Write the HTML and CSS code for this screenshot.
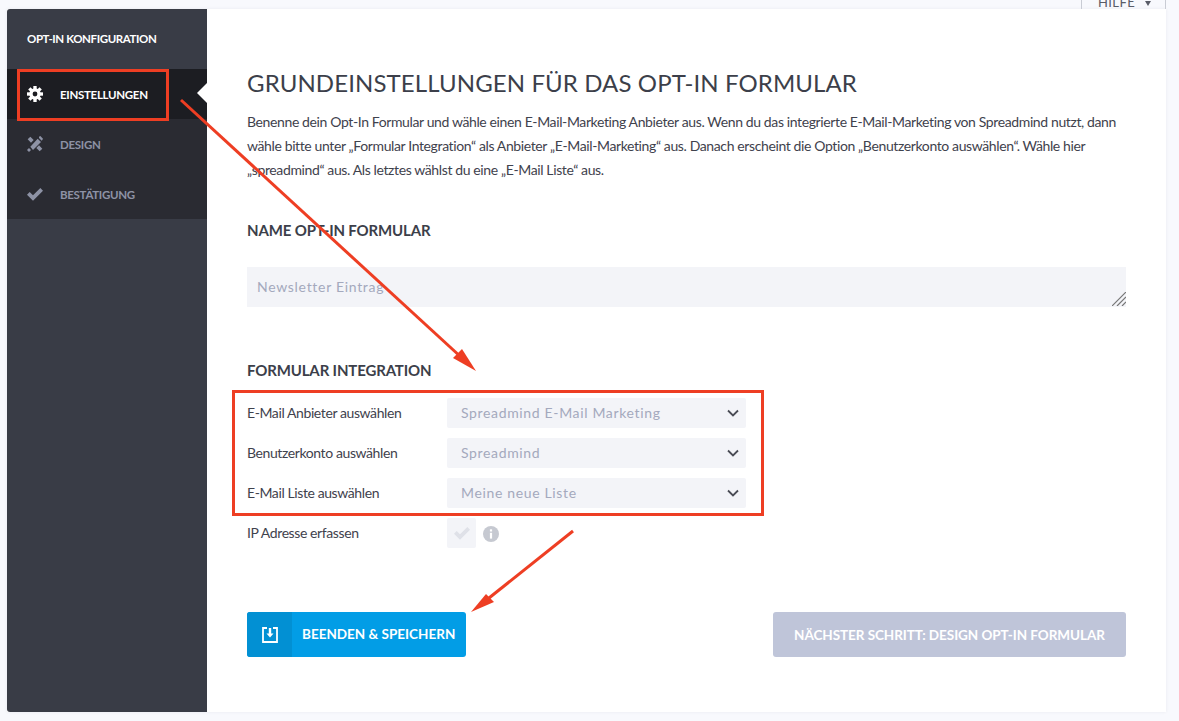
FILE: index.html
```html
<!DOCTYPE html>
<html lang="de">
<head>
    <meta charset="UTF-8">
    <title>Opt-In Konfiguration</title>
    <link rel="stylesheet" href="styles.css">
</head>
<body>
    <div class="card">
        <aside class="sidebar">
            <div class="sidebar-title">OPT-IN KONFIGURATION</div>
            <nav>
                <a class="nav-item active">
                    <svg class="nav-icon" viewBox="0 0 24 24">
                        <g>
                            <rect x="9.500" y="0" width="5" height="24"/>
                            <rect x="9.500" y="0" width="5" height="24" transform="rotate(45 12 12)"/>
                            <rect x="9.500" y="0" width="5" height="24" transform="rotate(90 12 12)"/>
                            <rect x="9.500" y="0" width="5" height="24" transform="rotate(135 12 12)"/>
                            <circle cx="12" cy="12" r="8.500"/>
                        </g>
                        <circle class="gear-hole" cx="12" cy="12" r="3.600"/>
                    </svg>
                    EINSTELLUNGEN
                </a>
                <a class="nav-item">
                    <svg class="nav-icon" viewBox="0 0 24 24"><path d="M5 16 16 4l5 5L9 21zM1 5l4-4 5 5-4 4zM14 18l4-4 5 5-4 4zM0 21l3-3 3 3-3 3zM18 1l2-1 4 4-1 2-1 1-4-4z"/></svg>
                    DESIGN
                </a>
                <a class="nav-item">
                    <svg class="nav-icon" viewBox="0 0 24 24"><path d="M0 13l4-4 5 5L20 3l4 4L9 22z"/></svg>
                    BESTÄTIGUNG
                </a>
            </nav>
        </aside>
        <main class="content">
            <div class="help-tab">HILFE <span class="help-caret"></span></div>
            <h1>GRUNDEINSTELLUNGEN FÜR DAS OPT-IN FORMULAR</h1>
            <p class="intro">Benenne dein Opt-In Formular und wähle einen E-Mail-Marketing Anbieter aus. Wenn du das integrierte E-Mail-Marketing von Spreadmind nutzt, dann wähle bitte unter „Formular Integration“ als Anbieter „E-Mail-Marketing“ aus. Danach erscheint die Option „Benutzerkonto auswählen“. Wähle hier „spreadmind“ aus. Als letztes wählst du eine „E-Mail Liste“ aus.</p>

            <h2 class="name-heading">NAME OPT-IN FORMULAR</h2>
            <div class="text-field">
                Newsletter Eintrag
                <svg class="resize-grip" viewBox="0 0 14 14"><path d="M0 14 14 0M5 14l9-9M10 14l4-4"/></svg>
            </div>

            <h2 class="integration-heading">FORMULAR INTEGRATION</h2>
            <div class="form-rows">
                <div class="form-row">
                    <label>E-Mail Anbieter auswählen</label>
                    <div class="select">Spreadmind E-Mail Marketing <svg class="chevron" viewBox="0 0 12 8"><path d="M1 1.500 6 6.500l5-5"/></svg></div>
                </div>
                <div class="form-row">
                    <label>Benutzerkonto auswählen</label>
                    <div class="select">Spreadmind <svg class="chevron" viewBox="0 0 12 8"><path d="M1 1.500 6 6.500l5-5"/></svg></div>
                </div>
                <div class="form-row">
                    <label>E-Mail Liste auswählen</label>
                    <div class="select">Meine neue Liste <svg class="chevron" viewBox="0 0 12 8"><path d="M1 1.500 6 6.500l5-5"/></svg></div>
                </div>
                <div class="form-row">
                    <label>IP Adresse erfassen</label>
                    <div class="checkbox"><svg viewBox="0 0 24 24"><path d="M0 13l4-4 5 5L20 3l4 4L9 22z"/></svg></div>
                    <svg class="info" viewBox="0 0 16 16"><circle cx="8" cy="8" r="8"/><rect x="6.900" y="6.800" width="2.200" height="5.800" fill="#fff"/><rect x="6.900" y="3.300" width="2.200" height="2.200" fill="#fff"/></svg>
                </div>
            </div>

            <div class="actions">
                <button class="btn-save">
                    <span class="btn-icon">
                        <svg viewBox="0 0 16 16"><path d="M5 1H1v14h14V1h-4" fill="none" stroke="#fff" stroke-width="1.800"/><path d="M6.800 1h2.400v5.500h2.300L8 10.500l-3.500-4h2.300z" fill="#fff"/></svg>
                    </span>
                    <span class="btn-label">BEENDEN &amp; SPEICHERN</span>
                </button>
                <button class="btn-next">NÄCHSTER SCHRITT: DESIGN OPT-IN FORMULAR</button>
            </div>
        </main>
    </div>

    <!-- annotations drawn on top of the screenshot -->
    <svg class="annotations" viewBox="0 0 1179 721">
        <rect x="18.500" y="70.500" width="149" height="49"/>
        <rect x="233.500" y="391.500" width="529" height="123"/>
        <path d="M181 100 462 358"/>
        <path d="M573 531 489 598"/>
        <polygon points="476,371 453,358 462,349"/>
        <polygon points="471,612 486,594 494,602"/>
    </svg>
</body>
</html>
```

FILE: styles.css
```css
html, body {
    height: 100%;
}

body {
    margin: 0;
    background-color: #f8f9fd;
    font-family: "Lato", "Noto Sans", sans-serif;
    color: #3c3f4a;
    overflow: hidden;
}

.card {
    display: flex;
    height: 703px;
    margin: 9px 13px 0 7px;
    background-color: #fff;
    box-shadow: 0 0 3px rgba(60, 63, 74, 0.08);
}

/* sidebar */
.sidebar {
    width: 200px;
    flex-shrink: 0;
    background-color: #393c46;
    border-radius: 3px 0 0 3px;
}

.sidebar-title {
    height: 60px;
    padding-left: 20px;
    line-height: 60px;
    font-size: 11.500px;
    font-weight: 700;
    letter-spacing: -0.4px;
    color: #fff;
}

.nav-item {
    display: flex;
    align-items: center;
    position: relative;
    height: 50px;
    padding-left: 20px;
    background-color: #2a2b32;
    font-size: 11.500px;
    font-weight: 700;
    letter-spacing: -0.3px;
    color: #8d92a5;
}

.nav-item.active {
    background-color: #1c1d22;
    color: #fff;
}

.nav-item.active::after {
    content: "";
    position: absolute;
    right: 0;
    top: 14px;
    border-style: solid;
    border-width: 10px 10px 10px 0;
    border-color: transparent #fff transparent transparent;
}

.nav-icon {
    width: 16px;
    height: 16px;
    margin-right: 17px;
    fill: #8d92a5;
}

.nav-item.active .nav-icon {
    fill: #fff;
}

.nav-item.active .gear-hole {
    fill: #1c1d22;
}

/* main column */
.content {
    flex: 1;
    position: relative;
    padding: 0 40px;
}

.help-tab {
    position: absolute;
    top: -9px;
    right: 0;
    width: 85px;
    height: 9px;
    overflow: hidden;
    box-sizing: border-box;
    border-left: 1px solid #c9ccd4;
    border-right: 1px solid #c9ccd4;
    padding-left: 16px;
    font-size: 13px;
    line-height: 5px;
    letter-spacing: 0.4px;
    color: #5a5d68;
}

.help-caret {
    display: inline-block;
    margin-left: 6px;
    vertical-align: 1px;
    border-style: solid;
    border-width: 5px 3px 0 3px;
    border-color: #5a5d68 transparent transparent transparent;
}

h1 {
    margin: 58px 0 0;
    font-size: 24px;
    line-height: 32px;
    font-weight: 400;
    letter-spacing: 0.1px;
    color: #3c3f4a;
}

.intro {
    margin: 11px 0 0;
    font-size: 14px;
    line-height: 24px;
    letter-spacing: -0.38px;
    color: #3f424d;
}

h2 {
    margin: 0;
    font-size: 15px;
    line-height: 20px;
    font-weight: 700;
    letter-spacing: -0.15px;
    color: #3c3f4a;
}

.name-heading {
    margin-top: 38px;
}

.integration-heading {
    margin-top: 53px;
}

.text-field {
    position: relative;
    height: 40px;
    margin-top: 27px;
    padding-left: 10px;
    background-color: #f3f4f8;
    line-height: 40px;
    font-size: 14px;
    letter-spacing: 0.7px;
    color: #a4a9bd;
}

.resize-grip {
    position: absolute;
    right: 0;
    bottom: 1px;
    width: 14px;
    height: 14px;
    fill: none;
    stroke: #777;
    stroke-width: 1.200;
}

.form-rows {
    display: flex;
    flex-direction: column;
    gap: 10px;
    margin-top: 18px;
}

.form-row {
    display: flex;
    align-items: center;
    height: 30px;
}

.form-row label {
    width: 200px;
    padding-bottom: 2px;
    font-size: 14px;
    letter-spacing: -0.4px;
    color: #3f424d;
}

.select {
    display: flex;
    align-items: center;
    justify-content: space-between;
    box-sizing: border-box;
    width: 299px;
    height: 30px;
    padding: 0 7px 2px 14px;
    background-color: #f3f4f8;
    border-radius: 2px;
    font-size: 14px;
    letter-spacing: 0.65px;
    color: #a4a9bd;
}

.chevron {
    width: 12px;
    height: 8px;
    margin-top: 2px;
    fill: none;
    stroke: #4a4c55;
    stroke-width: 1.800;
}

.checkbox {
    display: flex;
    align-items: center;
    justify-content: center;
    width: 29px;
    height: 30px;
    background-color: #f3f4f8;
    border-radius: 2px;
}

.checkbox svg {
    width: 16px;
    height: 16px;
    fill: #dfe1e8;
}

.info {
    width: 16px;
    height: 16px;
    margin: 2px 0 0 7px;
    fill: #c6c9d1;
}

/* bottom buttons */
.actions {
    display: flex;
    justify-content: space-between;
    margin-top: 64px;
}

.actions button {
    height: 45px;
    padding: 0;
    border: none;
    border-radius: 3px;
    font-family: inherit;
    font-size: 13.500px;
    font-weight: 700;
    white-space: nowrap;
    color: #fff;
}

.btn-save {
    display: flex;
    width: 219px;
    background-color: #029de6;
    overflow: hidden;
}

.btn-icon {
    display: flex;
    align-items: center;
    justify-content: center;
    width: 45px;
    height: 45px;
    background-color: #0290d3;
}

.btn-icon svg {
    width: 16px;
    height: 16px;
}

.btn-label {
    padding-left: 10px;
    line-height: 45px;
}

.btn-next {
    width: 353px;
    letter-spacing: -0.05px;
    background-color: #bfc5d9;
}

/* red arrows and boxes */
.annotations {
    position: absolute;
    top: 0;
    left: 0;
    width: 1179px;
    height: 721px;
    pointer-events: none;
}

.annotations rect {
    fill: none;
    stroke: #ee3e23;
    stroke-width: 3;
}

.annotations path {
    fill: none;
    stroke: #ee3e23;
    stroke-width: 3;
}

.annotations polygon {
    fill: #ee3e23;
}
```
